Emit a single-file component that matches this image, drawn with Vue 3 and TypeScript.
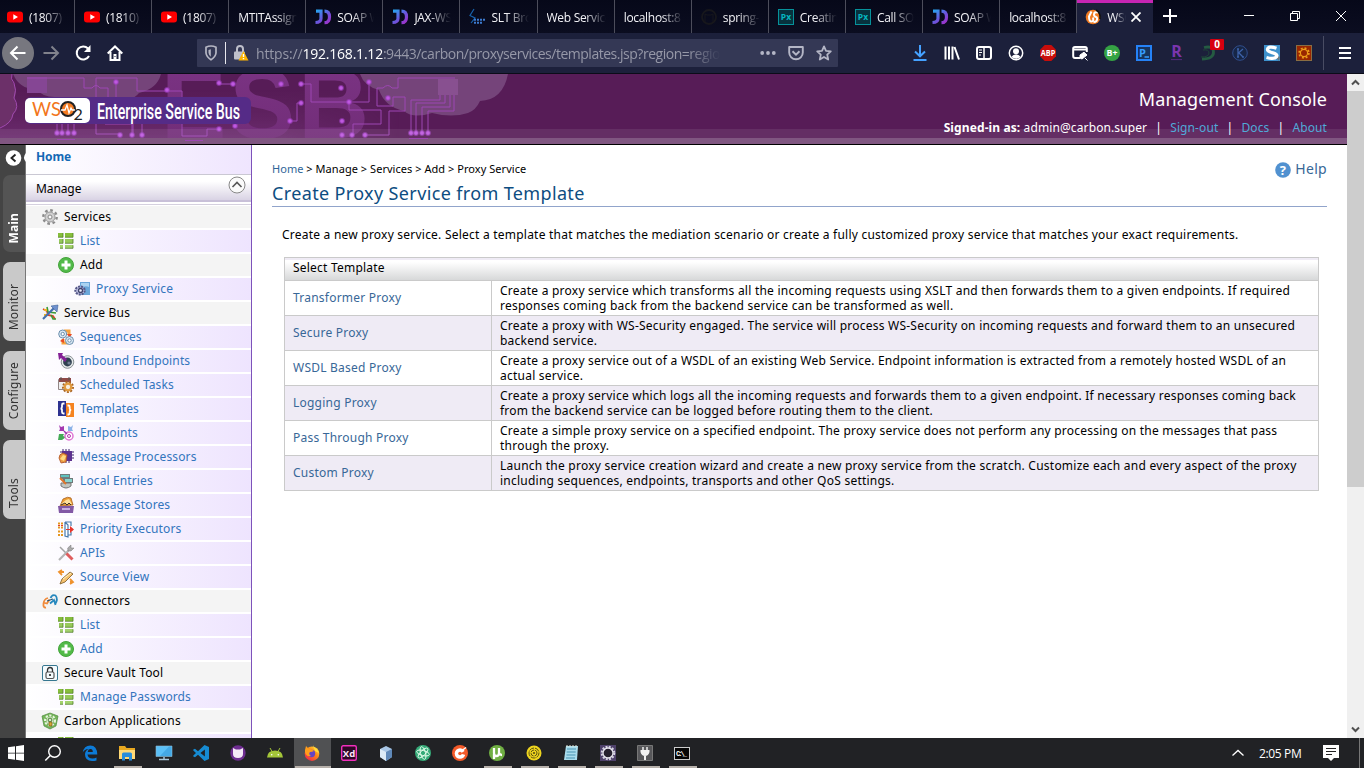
<script setup lang="ts">
interface Tab { label: string; icon?: string; active?: boolean }
interface MenuItem { label: string; icon: string; level: number }

const icons: Record<string, string> = {
  youtube: '<rect x="0" y="2.5" width="16" height="11" rx="3" fill="#f00"/><path d="M6.3 5.3v5.4L11 8z" fill="#fff"/>',
  jd: '<defs><linearGradient id="jdg" x2="1" y2="1"><stop stop-color="#25a5f0"/><stop offset=".55" stop-color="#6a55dd"/><stop offset="1" stop-color="#a030c8"/></linearGradient></defs><path d="M1 2.200h5v7.300Q6 13.300 .5 13.500M9.500 2.200q5 0 5 5.700t-5 5.800" fill="none" stroke="url(#jdg)" stroke-width="3.200"/>',
  slt: '<path d="M5 0 1 6.5l5 2.5-4 5" fill="none" stroke="#1763ae" stroke-width="1.2"/><path d="M5 10.7h11M5 13.7h9" stroke="#3d7bd0" stroke-width="2" stroke-dasharray="2 1"/>',
  github: '<circle cx="8" cy="8" r="7" fill="none" stroke="#17171c" stroke-width="1.8"/><path d="M4 13V5l2 1h4l2-1v8" stroke="#17171c" fill="none"/>',
  px: '<rect x=".5" y=".5" width="15" height="15" fill="#07323e" stroke="#06929b"/><text x="8" y="11" text-anchor="middle" font-family="Open Sans,sans-serif" font-size="8.5" font-weight="700" fill="#05b7c0">Px</text>',
  carbon: '<circle cx="8" cy="8" r="7.300" fill="#f07b22"/><path d="M6.500 2.500 4 7.500q0 5 2.500 5t1.500-4M13 3.500q-4-1-4 2 0 2 2 2.500t.5 4q-1 1-3 1" stroke="#fff" stroke-width="2" fill="none"/><path d="M11 1q5 3 4 9" stroke="#111" stroke-width="1.500" fill="none"/>',
  back: '<path d="M15.500 8H1M7.500 1.500 1 8l6.500 6.500" fill="none" stroke="#fff" stroke-width="2"/>',
  forward: '<path d="M.5 8H15M8.500 1.500 15 8l-6.500 6.500" fill="none" stroke="#81828c" stroke-width="2"/>',
  reload: '<path d="M14 11a6.500 6.500 0 1 1-1-7.500" fill="none" stroke="#fff" stroke-width="2"/><path d="M15.500 0v7H9z" fill="#fff"/>',
  home: '<path d="M.7 8.500 8 1.500l7.300 7M3.500 7v8h9V7" fill="none" stroke="#fff" stroke-width="2"/><path d="M6.500 9h3v6h-3z" fill="#fff"/><path d="M7.500 11.500h1" stroke="#1c203b"/>',
  shield: '<path d="M3 2.200Q8-.2 13 2.200V8q-.5 4-5 6.700Q3.500 12 3 8z" fill="none" stroke="#b6b7c4" stroke-width="1.700"/><path d="M7.800 4.200v7.500q-2-1.500-2.300-4V5z" fill="#b6b7c4"/>',
  lock: '<path d="M4 7V4q0-3 3-3t3 3v3" fill="none" stroke="#bebfca" stroke-width="2"/><rect x="1" y="6.500" width="11" height="8" rx="1" fill="#bebfca"/><path d="m10.500 6 5 9.500H5.500z" fill="#fdb400"/><path d="M10.500 9v3m0 1v1.300" stroke="#fff" stroke-width="1.400"/>',
  dots: '<circle cx="2.200" cy="8" r="1.900" fill="#b4b6c6"/><circle cx="8" cy="8" r="1.900" fill="#b4b6c6"/><circle cx="13.800" cy="8" r="1.900" fill="#b4b6c6"/>',
  pocket: '<path d="M1.200 2h13.600v5.500a6.800 6.800 0 0 1-13.600 0z" fill="none" stroke="#b4b6c6" stroke-width="1.900" stroke-linejoin="round"/><path d="m4.500 6.200 3.500 3.400 3.500-3.400" fill="none" stroke="#b4b6c6" stroke-width="1.900"/>',
  star: '<path d="m8 1.400 2 4.400 4.800.5-3.600 3.300 1 4.900L8 12l-4.200 2.500 1-4.900L1.200 6.300 6 5.800z" fill="none" stroke="#b4b6c6" stroke-width="1.800" stroke-linejoin="round"/>',
  download: '<path d="M8 0v11M3 6.500l5 4.800 5-4.800M1.500 15h13" fill="none" stroke="#45a1ff" stroke-width="2"/>',
  library: '<path d="M1.500 1.500v13M5 1.500v13M8.500 1.500v13M10.500 2l4.500 12.500" fill="none" stroke="#fff" stroke-width="2"/>',
  sidebar: '<rect x="1" y="2" width="14" height="12" rx="2" fill="none" stroke="#fff" stroke-width="2"/><path d="M8 2v12" stroke="#fff" stroke-width="1.500"/><path d="M3 5h3M3 7.500h3M3 10h2" stroke="#fff"/>',
  account: '<circle cx="8" cy="8" r="6.700" fill="none" stroke="#fff" stroke-width="1.500"/><circle cx="8" cy="6.300" r="3" fill="#fff"/><path d="M3.500 12q1.500-3 4.500-2.500 3-.5 4.500 2.500-4.500 3.500-9 0" fill="#fff"/>',
  abp: '<path d="M4.700 0h6.600L16 4.700v6.600L11.300 16H4.700L0 11.300V4.700z" fill="#c70d0b"/><text x="8" y="11" text-anchor="middle" font-family="Open Sans,sans-serif" font-weight="700" font-size="8.200" textLength="14.500" lengthAdjust="spacingAndGlyphs" fill="#fff">ABP</text>',
  edit: '<path d="M8 13H3q-1.800 0-1.800-2V3.500q0-1.500 1.800-1.500h10q1.800 0 1.800 1.500V7" fill="none" stroke="#fff" stroke-width="2"/><path d="M1 4.500h14" stroke="#fff" stroke-width="2"/><path d="m8 10 4-2.800 3 2.800-5 4-2-1zM13 13l2.500 2.500" fill="#fff" stroke="#fff"/>',
  bplus: '<circle cx="8" cy="8" r="8" fill="#35a344"/><text x="8" y="11" text-anchor="middle" font-family="Open Sans,sans-serif" font-weight="700" font-size="8.800" fill="#fff">B+</text>',
  pterm: '<rect x="0" y="0" width="16" height="16" fill="#2582f7"/><rect x="2" y="2" width="12" height="12" fill="#17345f"/><text x="3" y="12" font-family="Open Sans,sans-serif" font-weight="700" font-size="11" fill="#369cff">P</text><path d="M8.500 12h4.500" stroke="#369cff" stroke-width="1.500"/>',
  rext: '<text x="3.300" y="12" font-family="Open Sans,sans-serif" font-weight="700" font-size="16" fill="#7b35ae">R</text><path d="M3 14.600h11" stroke="#55277e"/>',
  curl: '<path d="M4 2.500q9-2 9.500 4Q14 14 2 14" fill="none" stroke="#255b42" stroke-width="2.800"/><path d="M3 5q6-1 6 3t-8 4" fill="none" stroke="#1e4438" stroke-width="1"/>',
  kext: '<circle cx="8" cy="8" r="7.300" fill="#172646" stroke="#304e8d"/><path d="M5 4h2M6 4v8M5 12h2M6.500 8 11 4M7 8l4 4m-1 0h2" fill="none" stroke="#3e62a9" stroke-width="1.300"/>',
  sext: '<path d="M0 0h16v16H0z" fill="#3e91cc"/><path d="M15 16 8 8l8 4z" fill="#65777f"/><path d="M12.500 3.200q-8-2.600-9 1-.3 2 4.700 3.500 6 1.500 4.300 4-2 3-10 .8" fill="none" stroke="#fff" stroke-width="3.300"/>',
  gearext: '<rect x=".5" y=".5" width="15" height="15" fill="#992600" stroke="#896d43"/><circle cx="8" cy="8" r="4.900" fill="none" stroke="#ed9c19" stroke-width="1.700" stroke-dasharray="1.924 1.924"/><circle cx="8" cy="8" r="3.600" fill="none" stroke="#ed9c19" stroke-width="1.200"/>',
  gear: '<circle cx="8" cy="8" r="6.700" fill="none" stroke="#8b8b8b" stroke-width="2.400" stroke-dasharray="2.630 2.630"/><circle cx="8" cy="8" r="5" fill="#d0d0d0" stroke="#999"/><circle cx="8" cy="8" r="2" fill="#f9f9f9" stroke="#888"/>',
  list: '<path d="M0 0h5v4H0zM7 0h8v4H7z" fill="#86bd3c"/><path d="M1 6h4v4H1zM7 6h8v4H7z" fill="#97c95a"/><path d="M2 12h3v3H2zM7 12h8v3H7z" fill="#a4d26e"/><path d="M0 4.300h5V0M7 4.300h8V0M1 10.300h4V6M7 10.300h8V6M2 15.300h3M7 15.300h8v-3" fill="none" stroke="#4f7f24" stroke-width=".8"/>',
  add: '<circle cx="8" cy="8" r="7.500" fill="#52ba49" stroke="#43a43a"/><path d="M8 3.500v9M3.500 8h9" stroke="#fff" stroke-width="3"/>',
  proxy: '<path d="M6 1h10v13H6z" fill="#6aa6d9"/><path d="M7 2h8v4q-4-2-8 1z" fill="#abd3f1"/><ellipse cx="6" cy="9.500" rx="4.700" ry="4" fill="#bbbbe0" stroke="#555788" stroke-width="2" stroke-dasharray="2 1"/><circle cx="6.500" cy="9.500" r="2" fill="#eef" stroke="#3e426b" stroke-width="1.300"/>',
  bus: '<path d="m1 4 4 2 1 4 5 1 2 3" fill="none" stroke="#d84428" stroke-width="1.800"/><path d="m5 2 1 5 8 1M9 10l2 4h3" fill="none" stroke="#3a9a36" stroke-width="1.600"/><path d="M2 5h3m-3 5h3" stroke="#eeb224" stroke-width="2"/><path d="M1 14 12 3" stroke="#426fae" stroke-width="2.200"/><path d="m9 1 7-1-1 7z" fill="#6e91ce" stroke="#3e639b" stroke-width=".6"/>',
  sequences: '<path d="M6 2h5v4M5 10v4h5" fill="none" stroke="#f5a33f" stroke-width="3"/><path d="m9 5 2.500 4L14 5zM2 12l4-3v5z" fill="#e94b25"/><circle cx="4.700" cy="5" r="4" fill="#dceaf5" stroke="#6c8fad"/><circle cx="11.500" cy="11.500" r="4" fill="#dceaf5" stroke="#6c8fad"/><circle cx="4.700" cy="5" r="1.700" fill="#fff" stroke="#6c8fad"/><circle cx="11.500" cy="11.500" r="1.700" fill="#fff" stroke="#6c8fad"/>',
  inbound: '<circle cx="9.500" cy="9" r="6.300" fill="#e5e8ea" stroke="#8a9295"/><circle cx="9.500" cy="9" r="4.400" fill="#304050"/><circle cx="11" cy="10" r="1.600" fill="#718093"/><path d="M0 0h5l-1 2 5 4-2 3-4-4-2 2z" fill="#842095"/>',
  scheduled: '<path d="M.5 2.500h12v10H.5z" fill="#efefef" stroke="#928786"/><path d="M1 1h12v4H1z" fill="#8f4a48"/><path d="M3 0v3M11 0v3" stroke="#555"/><circle cx="10" cy="10" r="5" fill="none" stroke="#a96420" stroke-width="2" stroke-dasharray="2 1.400"/><circle cx="10" cy="10" r="3.300" fill="#f7eee1" stroke="#e19a3f" stroke-width="2.300"/>',
  templates: '<path d="M0 0h8v15H0z" fill="#2d3190"/><path d="M8 2h8v14H8z" fill="#f58220"/><path d="M6.500 2.500H5.300q-1.300 0-1.300 1.500v2q0 1.500-1.500 1.500Q4 7.500 4 9v2q0 1.500 1.300 1.500h1.200M9.500 4.500h1q1.200 0 1.200 1.500v1.500q0 1.500 1.500 1.500-1.500 0-1.500 1.500V12q0 1.500-1.200 1.500h-1" fill="none" stroke="#fff" stroke-width="1.800"/>',
  endpoints: '<path d="m1 0 2 2 3-1v5H1l1-2z" fill="#a439b0"/><path d="m15 0-2 2-3-1v5h5l-1-2z" fill="#8ab2e8"/><path d="m0 15 1-6h5l-1 2 3 1-4 3z" fill="#43aa55"/><circle cx="11" cy="11" r="4" fill="#fff" stroke="#df75d3" stroke-width="1.500"/><circle cx="11" cy="11" r="1.500" fill="none" stroke="#ba39b4"/><path d="m6 6 3 3" stroke="#9c38ad" stroke-width="1.500"/>',
  processors: '<path d="M5 0v14M8 0v14M11 0v14M2 3h14M2 6h14M2 9h14" stroke="#3d206b"/><rect x="4" y="2" width="10" height="10" fill="#5c318f"/><path d="M1 9q0-4 4-5l4 2-1 7-5 1z" fill="#ea9a42" stroke="#ae5224" stroke-width=".8"/><path d="m2 10 3-4 3 1-2 5z" fill="#ffdb83"/>',
  entries: '<path d="M2 1h10v5H2z" fill="#737e7d"/><path d="M3 2h8v2H3z" fill="#5fc3be"/><path d="M5 5h10v5H5z" fill="#6f7979"/><path d="M7 6h7v3H7z" fill="#88d4ce"/><path d="M3 10h10v3q-5 4-10 0z" fill="#c0c4bf" stroke="#747777"/><path d="m2 5 6 6" stroke="#df762b" stroke-width="2"/>',
  stores: '<path d="m2 9 3-7q5-3 8-1l2 7z" fill="#ee9e33" stroke="#a76224" stroke-width=".8"/><path d="m3 7 5-4 3-1 3 5z" fill="#ffdf9a"/><path d="M0 9h16l-1 7H1z" fill="#8259a5"/><path d="M4 11h8v2H4z" fill="#c9afe0"/><path d="m3 8 4-2 2 2 2-2 2 2" stroke="#3f3128" fill="none"/>',
  priority: '<path d="M0 2.500h5M0 6.500h5M0 10.500h5M0 14h5" stroke="#e59721" stroke-width="1.800" stroke-dasharray="2 1"/><path d="M0 4.500h5" stroke="#e43a2d" stroke-dasharray="2 1"/><path d="M7 1h6v4M7 1v14l3 1V4L7 1M10 14h3v-3" fill="#fff" stroke="#4879ac" stroke-width="1.200"/><path d="M8 8h4V5l4 3.500-4 3.500V9H8z" fill="#e6332a"/>',
  apis: '<path d="M2 2 14 14" stroke="#a4a4a4" stroke-width="1.500"/><path d="m1 15 9.500-9.500" stroke="#b4b4b4" stroke-width="2.200"/><path d="m10 6-.3-3L13 0v3h3l-3 3z" fill="#aaa" stroke="#777" stroke-width=".5"/><path d="m8.500 8.500 6 6" stroke="#df5c5d" stroke-width="3"/>',
  source: '<path d="M4 1 1 3l3 3M1 3h5M12 10l3 3-3 2m3-2h-3" fill="none" stroke="#ef922d" stroke-width="1.800"/><path d="m2 15 2-5 8-7 3 2-8 8z" fill="#f5c16e" stroke="#876532" stroke-width=".9"/><path d="M5 10l8-6" stroke="#fff1c0"/>',
  connectors: '<path d="M4 14.500Q1 15 1.500 10.500T6 5M1 9.500l4 1 2.500-4" fill="none" stroke="#f08a3a" stroke-width="1.800"/><path d="M8.500 5q2-4 5-2.500 3 3.500-.5 9M8 10.500l4-3.500 1.500 5" fill="none" stroke="#2587bd" stroke-width="1.800"/><path d="m5 8 6-2" stroke="#245274" stroke-width="1.300"/>',
  vault: '<rect x=".5" y=".5" width="15" height="15" rx="1.500" fill="#f5fbfd" stroke="#367790"/><rect x="4" y="7" width="8" height="6.500" rx="1.500" fill="none" stroke="#555" stroke-width="1.200"/><path d="M5.500 7V5q0-2.500 2.500-2.500t2.500 2.500v2" fill="none" stroke="#333" stroke-width="1.300"/><circle cx="8" cy="10" r="1.100" fill="#222"/>',
  capps: '<path d="m8 0 8 3-2 10-6 3-6-3L0 3z" fill="#74b55a" stroke="#508a3d" stroke-width=".7"/><circle cx="8" cy="7.500" r="5" fill="none" stroke="#e8f4df" stroke-width="2" stroke-dasharray="2.200 1.500"/><circle cx="8" cy="7.500" r="3.500" fill="#d4e9c9"/><circle cx="8" cy="7" r="1.900" fill="none" stroke="#4c7c35"/><path d="M7 9h3v4H7z" fill="#d8a635" stroke="#745c1c" stroke-width=".7"/>',
  help: '<circle cx="8" cy="8" r="7.800" fill="#5191d0"/><text x="8" y="12.700" text-anchor="middle" font-family="Open Sans,sans-serif" font-weight="700" font-size="13" fill="#fff">?</text>',
  windows: '<path d="M0 2.300 7 1.300V7.700H0zM8 1.200l8-1.200v7.700H8zM0 8.500h7v6.300l-7-1zM8 8.500h8V16l-8-1.200z" fill="#fff"/>',
  search: '<circle cx="9.500" cy="6.500" r="5.800" fill="none" stroke="#fff" stroke-width="1.400"/><path d="m5.300 10.500-5 5" stroke="#fff" stroke-width="1.500"/>',
  edge: '<path d="M.7 7.500Q2 .7 8.300.5q6.700 0 7 9H5.500q.5 4 5 4 2.500 0 4-1v3Q12.500 16 10 16q-7-.2-7-6.500Q3 5.500 6.500 4 2.500 4 .7 7.500M5.700 7h5.100Q10.800 3.700 8.200 4q-2.200.2-2.500 3" fill="#0d7bd7"/>',
  folder: '<path d="M0 1h6l1.500 2H16v11H0z" fill="#e9a920"/><path d="M0 5h16v9H0z" fill="#ffd976"/><path d="M3 9q0-1.500 1.500-1.500h7Q13 7.500 13 9v6.500h-3V12H6v3.500H3z" fill="#288ddb"/>',
  pc: '<path d="M0 1h16v10.500H0z" fill="#5bc0f8" stroke="#8db7cc" stroke-width=".6"/><path d="m4 11 9-9.500h2.500V11z" fill="#44a9e6"/><path d="M3 14.500h10M8 12v2" stroke="#a7c6da" stroke-width="1.500"/>',
  vscode: '<path d="m11.500 0 4.500 2v12l-4.500 2L5 9.800 2 12.300.3 11.500v-1L3 8 .3 5.500v-1L2 3.700l3 2.500zm.4 4.500L7.400 8l4.500 3.500z" fill="#168bd2"/>',
  ghdesk: '<circle cx="8" cy="8" r="7.700" fill="#6e2d91"/><path d="m3 3 3 1.500h4L13 3v6q0 4-5 4T3 9z" fill="#f4e9f7"/>',
  android: '<path d="M0 12.500Q.5 5.500 8 5.500t8 7z" fill="#a4c639"/><path d="m3 3 2 3.500M13 3l-2 3.500" stroke="#a4c639"/><circle cx="4.700" cy="9.700" r=".8" fill="#fff"/><circle cx="11.300" cy="9.700" r=".8" fill="#fff"/>',
  firefox: '<defs><linearGradient id="ffg" x1="1" y1="0" x2=".2" y2="1"><stop stop-color="#fff044"/><stop offset=".45" stop-color="#ff8a16"/><stop offset="1" stop-color="#ee214e"/></linearGradient></defs><circle cx="8" cy="8.700" r="7.300" fill="url(#ffg)"/><path d="M9 0q1 3 4 4l2 4-4-2z" fill="#ffdf3e"/><circle cx="7.500" cy="8.500" r="3.700" fill="#6544c5"/><path d="M1 5 2 1l3 3q3 0 5 2-2 1-4 1-2 2 1 4-5 1-6-4z" fill="#ff9d1b"/>',
  xd: '<rect x=".7" y=".7" width="14.600" height="14.600" rx="1.500" fill="#2e0826" stroke="#f22fbd" stroke-width="1.400"/><text x="8" y="11.700" text-anchor="middle" font-family="Open Sans,sans-serif" font-size="9.500" font-weight="700" fill="#ffe4fb">Xd</text>',
  cube: '<path d="m8 1 6 3v8l-6 4-6-4V4z" fill="#a9c7e6"/><path d="m2 4 6 3v9l-6-4z" fill="#dcebf7"/><path d="m8 7 6-3v8l-6 4z" fill="#5f89b9"/>',
  atom: '<circle cx="8" cy="8" r="8" fill="#35aa78"/><g fill="none" stroke="#eaffef" stroke-width=".9"><ellipse cx="8" cy="8" rx="6.500" ry="2.500" transform="rotate(15 8 8)"/><ellipse cx="8" cy="8" rx="6.500" ry="2.500" transform="rotate(75 8 8)"/><ellipse cx="8" cy="8" rx="6.500" ry="2.500" transform="rotate(135 8 8)"/></g>',
  postman: '<circle cx="8" cy="8" r="8" fill="#f35a29"/><circle cx="8" cy="8.500" r="5.300" fill="#fff"/><path d="M15 4.500 8.500 8.500l6.500 2z" fill="#f35a29"/><path d="M14 2.500 8 7" stroke="#fff" stroke-width="1.300"/><circle cx="8" cy="8.500" r="1.800" fill="#f35a29"/>',
  utorrent: '<circle cx="8" cy="8" r="8" fill="#70af43"/><path d="M5 3v5q0 3 2.500 3T10 8V3m0 5q1 2 3 2M5 9v5" stroke="#fff" stroke-width="2.300" fill="none"/>',
  spiral: '<circle cx="8" cy="8" r="7.500" fill="#eed51f"/><g fill="none" stroke="#5a5110"><circle cx="8" cy="8" r="5" stroke-dasharray="5 1"/><circle cx="8" cy="8" r="3" stroke-dasharray="4 1"/></g><circle cx="8" cy="8" r="1.100" fill="#5a5110"/>',
  notepad: '<path d="M3 1h12l-1 14H1z" fill="#a9dcec"/><path d="M4 4h9M3.700 7h9M3.500 10h9M3 13h9" stroke="#4993b1"/><path d="M4 0v2m3-2v2m3-2v2m3-2v2" stroke="#e3e3d5"/>',
  eclipse: '<path d="M0 0h16v16H0z" fill="#4e416a"/><circle cx="8" cy="8" r="6.300" fill="none" stroke="#d5d3e1" stroke-width="2" stroke-dasharray="2 1.300"/><circle cx="8" cy="8" r="5" fill="#25212e" stroke="#e8e7ef" stroke-width="1.300"/>',
  plug: '<path d="M.5.5h15v15H.5z" fill="#57575a" stroke="#777"/><path d="M6 2v4m4-4v4" stroke="#eee" stroke-width="1.500"/><path d="M3.500 5h9v2q-1 4-4.500 4-3.500 0-4.500-4zM7 10.500h2V15H7z" fill="#f2f2f2"/>',
  cmd: '<rect x=".5" y="2.500" width="15" height="12" fill="#050505" stroke="#ccc"/><text x="2" y="11" font-family="Liberation Mono,monospace" font-size="7" font-weight="700" fill="#fff" textLength="11">C:\\_</text>',
}

const tabs: Tab[] = [
  { label: '(1807)', icon: 'youtube' }, { label: '(1810)', icon: 'youtube' }, { label: '(1807)', icon: 'youtube' },
  { label: 'MTITAssign' }, { label: 'SOAP W', icon: 'jd' }, { label: 'JAX-WS', icon: 'jd' }, { label: 'SLT Bro', icon: 'slt' },
  { label: 'Web Service' }, { label: 'localhost:8' }, { label: 'spring-', icon: 'github' }, { label: 'Creatin', icon: 'px' },
  { label: 'Call SO', icon: 'px' }, { label: 'SOAP W', icon: 'jd' }, { label: 'localhost:8' }, { label: 'WSO', icon: 'carbon', active: true },
]
const extensions = ['download', 'library', 'sidebar', 'account', 'abp', 'edit', 'bplus', 'pterm', 'rext', 'curl', 'kext', 'sext', 'gearext']
const sideTabs = ['Main', 'Monitor', 'Configure', 'Tools']
const m = (label: string, icon: string, level: number): MenuItem => ({ label, icon, level })
const menu: MenuItem[] = [
  m('Services', 'gear', 1), m('List', 'list', 2), m('Add', 'add', 0), m('Proxy Service', 'proxy', 3),
  m('Service Bus', 'bus', 1), m('Sequences', 'sequences', 2), m('Inbound Endpoints', 'inbound', 2),
  m('Scheduled Tasks', 'scheduled', 2), m('Templates', 'templates', 2), m('Endpoints', 'endpoints', 2),
  m('Message Processors', 'processors', 2), m('Local Entries', 'entries', 2), m('Message Stores', 'stores', 2),
  m('Priority Executors', 'priority', 2), m('APIs', 'apis', 2), m('Source View', 'source', 2),
  m('Connectors', 'connectors', 1), m('List', 'list', 2), m('Add', 'add', 2), m('Secure Vault Tool', 'vault', 1),
  m('Manage Passwords', 'list', 2), m('Carbon Applications', 'capps', 1), m('List', 'list', 2),
]
const templates: { name: string; lines: string[] }[] = [
  { name: 'Transformer Proxy', lines: ['Create a proxy service which transforms all the incoming requests using XSLT and then forwards them to a given endpoints. If required', 'responses coming back from the backend service can be transformed as well.'] },
  { name: 'Secure Proxy', lines: ['Create a proxy with WS-Security engaged. The service will process WS-Security on incoming requests and forward them to an unsecured', 'backend service.'] },
  { name: 'WSDL Based Proxy', lines: ['Create a proxy service out of a WSDL of an existing Web Service. Endpoint information is extracted from a remotely hosted WSDL of an', 'actual service.'] },
  { name: 'Logging Proxy', lines: ['Create a proxy service which logs all the incoming requests and forwards them to a given endpoint. If necessary responses coming back', 'from the backend service can be logged before routing them to the client.'] },
  { name: 'Pass Through Proxy', lines: ['Create a simple proxy service on a specified endpoint. The proxy service does not perform any processing on the messages that pass', 'through the proxy.'] },
  { name: 'Custom Proxy', lines: ['Launch the proxy service creation wizard and create a new proxy service from the scratch. Customize each and every aspect of the proxy', 'including sequences, endpoints, transports and other QoS settings.'] },
]
const taskbar = ['windows', 'search', 'edge', 'folder', 'pc', 'vscode', 'ghdesk', 'android', 'firefox', 'xd', 'cube', 'atom', 'postman', 'utorrent', 'spiral', 'notepad', 'eclipse', 'plug', 'cmd']
const running = ['folder', 'firefox', 'utorrent', 'spiral', 'notepad', 'eclipse', 'plug', 'cmd']
const nodes: number[][] = [[116, 82], [167, 90], [219, 83], [233, 84], [281, 84], [301, 84], [341, 88], [369, 82], [388, 98], [301, 103], [349, 102], [290, 121], [342, 121], [219, 129], [235, 126], [120, 135], [132, 135], [142, 135], [342, 135], [352, 135], [365, 135], [57, 133], [62, 133], [68, 133], [74, 133], [411, 133], [416, 133], [422, 133], [428, 133]]
</script>

<template>
  <div class="screen">
    <div class="tabbar">
      <div v-for="(t, i) in tabs" :key="i" class="tab" :class="{ active: t.active, plain: !t.icon, first: i === 0 }">
        <svg v-if="t.icon" class="ic" viewBox="0 0 16 16" v-html="icons[t.icon]"></svg>
        <span class="tablabel">{{ t.label }}</span>
        <svg v-if="t.active" class="tabclose" viewBox="0 0 10 10"><path d="M.5.5l9 9M9.500.5l-9 9" stroke="#fff" stroke-width="1.800" /></svg>
      </div>
      <svg class="newtab" viewBox="0 0 14 14"><path d="M7 0v14M0 7h14" stroke="#fff" stroke-width="2" /></svg>
      <div class="wincontrols">
        <svg viewBox="0 0 10 10"><path d="M0 4.500h10" stroke="#fff" /></svg>
        <svg viewBox="0 0 10 10"><path d="M.5 2.500h7v7h-7zM2.500 2.500v-2h7v7h-2" fill="none" stroke="#fff" /></svg>
        <svg viewBox="0 0 10 10"><path d="M0 0l10 10M10 0L0 10" stroke="#fff" /></svg>
      </div>
    </div>

    <div class="toolbar">
      <div class="nav">
        <span class="backbtn"><svg class="ic" viewBox="0 0 16 16" v-html="icons.back"></svg></span>
        <svg class="ic" viewBox="0 0 16 16" v-html="icons.forward"></svg>
        <svg class="ic" viewBox="0 0 16 16" v-html="icons.reload"></svg>
        <svg class="ic" viewBox="0 0 16 16" v-html="icons.home"></svg>
      </div>
      <div class="urlbar">
        <svg class="ic" viewBox="0 0 16 16" v-html="icons.shield"></svg>
        <i class="urlsep"></i>
        <svg class="ic" viewBox="0 0 16 16" v-html="icons.lock"></svg>
        <span class="url">https://<b>192.168.1.12</b><span class="path">:9443/carbon/proxyservices/templates.jsp?region=region1</span></span>
        <span class="urlicons">
          <svg v-for="n in ['dots', 'pocket', 'star']" :key="n" class="ic" viewBox="0 0 16 16" v-html="icons[n]"></svg>
        </span>
      </div>
      <div class="exts">
        <span v-for="n in extensions" :key="n" class="ext">
          <svg class="ic" viewBox="0 0 16 16" v-html="icons[n]"></svg>
          <em v-if="n === 'curl'" class="badge">0</em>
        </span>
      </div>
      <i class="toolsep"></i>
      <svg class="burger" viewBox="0 0 12 12"><path d="M0 1h12M0 6h12M0 11h12" stroke="#fff" stroke-width="2" /></svg>
    </div>

    <div class="page">
      <div class="content">
        <header class="head">
          <svg class="art" viewBox="0 74 510 70">
            <defs>
              <linearGradient id="esb" x2="0" y2="1"><stop stop-color="#7c3485" /><stop offset="1" stop-color="#702c76" /></linearGradient>
              <radialGradient id="glow"><stop stop-color="#c868e8" /><stop offset=".45" stop-color="#b04bd2" /><stop offset="1" stop-color="#9038b0" stop-opacity="0" /></radialGradient>
              <linearGradient id="haze" x2="0" y2="1"><stop stop-color="#783278" stop-opacity="0" /><stop offset="1" stop-color="#8a4391" stop-opacity=".4" /></linearGradient>
              <linearGradient id="fade"><stop offset=".7" stop-color="#fff" /><stop offset="1" stop-color="#fff" stop-opacity="0" /></linearGradient>
              <mask id="fadeout"><rect x="0" y="74" width="400" height="70" fill="url(#fade)" /></mask>
            </defs>
            <rect x="0" y="74" width="510" height="70" fill="#571c57" />
            <rect x="0" y="90" width="400" height="48" fill="url(#haze)" mask="url(#fadeout)" />
            <path d="M0 74h12q-2 6 2 10 4 8 0 15 6 9-1 16-1 9-13 12z" fill="#6c3069" />
            <path d="M12 74q-2 5 2 9 3 7 0 15 6 9-1 16-1 9-13 14" fill="none" stroke="#a04aaf" />
            <path d="M13 74q7 16 24 15 6 9 20 8 26 12 52 6 22 0 30-10 18-4 22-19z" fill="#75447a" />
            <path d="M360 74q4 12 19 16 6 17 25 21 9 8 28 2 20 5 36 0 8-3 12-12 23-1 28-27z" fill="#75447a" />
            <text x="161" y="138" font-family="Liberation Sans, sans-serif" font-weight="700" font-size="98" textLength="208" fill="url(#esb)">ESB</text>
            <rect x="27" y="77" width="20" height="16" fill="#854694" />
            <rect x="438" y="79" width="20" height="16" fill="#885090" />
            <g fill="none" stroke="#9d47b3">
              <path d="M27 78h57v10h8q4-5 8 0h8v10M96 96V78h41v13h45v14h34M116 82v20M96 96v38h24M133 124v10M142 124v10M105 124h27v11M57 116v17M62 116v17M68 116v17M74 116v17M182 120v16h25v-7h12" />
              <path d="M233 84h-14M290 121h7v-18h4M301 84h10v18h58V82M349 102v8h32v14h-28v11M365 135h24v-24h16V97h-12v9h-16v-18h6q5-5 9 0h6V78h57" />
              <path d="M411 133v-33h29V95M416 133v-30h29v-8M422 133v-26h28V95M428 133v-22h26V95M57 139h18M185 140h18M409 139h19" />
            </g>
            <circle v-for="(n, i) in nodes" :key="i" :cx="n[0]" :cy="n[1]" r="3.600" fill="url(#glow)" />
            <rect x="0" y="129" width="510" height="9" fill="#fff" opacity=".08" />
            <rect x="0" y="138" width="510" height="6" fill="#805681" />
            <path d="M57 139.500h18M185 140.500h18M409 138.500h19" stroke="#9d47b3" />
            <rect x="25" y="97" width="226" height="27" rx="6" fill="#552b87" />
            <rect x="25" y="98" width="65" height="25" rx="5" fill="#fff" />
            <text x="32" y="116" font-family="Lato, sans-serif" font-size="20" textLength="29" lengthAdjust="spacingAndGlyphs" fill="#f2761b">WS</text>
            <circle cx="68" cy="109" r="7" fill="#f47b20" stroke="#222" stroke-width="2" />
            <path d="M61 110h4l2-5 2 8 2-5 1 2h3" fill="none" stroke="#fff" stroke-width="1.300" />
            <text x="73.500" y="120" font-family="Lato, sans-serif" font-size="16" fill="#222">2</text>
            <text x="97" y="118.500" font-family="Roboto, sans-serif" font-weight="500" font-size="22" textLength="143" lengthAdjust="spacingAndGlyphs" fill="#fff">Enterprise Service Bus</text>
          </svg>
          <div class="console">
            <div class="ctitle">Management Console</div>
            <div class="signed"><b>Signed-in as:</b>&nbsp;admin@carbon.super<i>|</i><a>Sign-out</a><i>|</i><a>Docs</a><i>|</i><a>About</a></div>
          </div>
        </header>

        <div class="body">
          <div class="strip">
            <div class="collapse"><svg viewBox="0 0 26 18"><circle cx="13.500" cy="9" r="7.800" fill="#fff" /><path d="m15.500 5.500-4 3.500 4 3.500" fill="none" stroke="#222" stroke-width="1.900" /><path d="M26 4q-4 4.500 0 9" fill="#fff" /></svg></div>
            <div v-for="(s, i) in sideTabs" :key="s" class="vtab" :class="{ on: i === 0 }"><span>{{ s }}</span></div>
          </div>
          <nav class="menu">
            <div class="mhome">Home</div>
            <div class="mmanage"><span>Manage</span>
              <svg viewBox="0 0 18 18"><circle cx="9" cy="9" r="8" fill="#fafafa" stroke="#888" /><path d="m4.500 11 4.500-4.500 4.500 4.500" fill="none" stroke="#555" stroke-width="1.600" /></svg>
            </div>
            <div class="mrule"></div>
            <div v-for="(it, i) in menu" :key="i" class="mi" :class="'l' + it.level">
              <svg class="ic" viewBox="0 0 16 16" v-html="icons[it.icon]"></svg><span>{{ it.label }}</span>
            </div>
          </nav>
          <main class="main">
            <div class="crumbrow">
              <div class="crumbs"><a>Home</a> &gt; Manage &gt; Services &gt; Add &gt; Proxy Service</div>
              <div class="help"><svg class="ic" viewBox="0 0 16 16" v-html="icons.help"></svg>Help</div>
            </div>
            <h2>Create Proxy Service from Template</h2>
            <p class="intro">Create a new proxy service. Select a template that matches the mediation scenario or create a fully customized proxy service that matches your exact requirements.</p>
            <div class="tbl">
              <div class="th">Select Template</div>
              <div v-for="(t, i) in templates" :key="t.name" class="tr" :class="{ alt: i % 2 === 1 }">
                <div class="tn">{{ t.name }}</div>
                <div class="td"><div v-for="l in t.lines" :key="l">{{ l }}</div></div>
              </div>
            </div>
          </main>
        </div>
      </div>
      <div class="scroll">
        <svg viewBox="0 0 17 17"><path d="m5 10.500 3.500-3.500 3.500 3.500" fill="none" stroke="#505050" stroke-width="2" /></svg>
        <div class="thumb"></div>
        <svg viewBox="0 0 17 17"><path d="m5 6.500 3.500 3.500L12 6.500" fill="none" stroke="#505050" stroke-width="2" /></svg>
      </div>
    </div>

    <footer class="taskbar">
      <span v-for="n in taskbar" :key="n" class="task" :class="{ running: running.includes(n), current: n === 'firefox' }">
        <svg class="ic" viewBox="0 0 16 16" v-html="icons[n]"></svg>
      </span>
      <div class="tray">
        <svg class="up" viewBox="0 0 12 8"><path d="m.5 6.500 5.500-5 5.500 5" fill="none" stroke="#fff" stroke-width="1.300" /></svg>
        <span class="clock">2:05 PM</span>
        <svg class="note" viewBox="0 0 16 16"><path d="M0 0h16v13h-5l-3 3-3-3H0z" fill="#fff" /><path d="M3 3.500h10M3 6.500h10M3 9.500h6" stroke="#222" /></svg>
        <i class="desk"></i>
      </div>
    </footer>
  </div>
</template>

<style>
body { margin: 0; overflow: hidden; background: #fff; }
</style>

<style scoped>
* { box-sizing: border-box; }
.screen { width: 1364px; height: 768px; display: flex; flex-direction: column; overflow: hidden; font-family: "Noto Sans", "Open Sans", sans-serif; font-size: 12px; color: #000; }
.ic { width: 16px; height: 16px; flex: none; display: block; overflow: visible; }

.tabbar { height: 33px; flex: none; display: flex; background: linear-gradient(#060819, #0b0d20); font-family: "Open Sans", sans-serif; color: #f3f3f7; }
.tab { width: 77.1px; flex: none; display: flex; align-items: center; padding: 1px 8px 0 9px; border-right: 1px solid #4c4d5b; overflow: hidden; }
.tab.first { width: 75px; padding-left: 7px; }
.tab.plain { padding-left: 9px; }
.tablabel { flex: 1; margin-left: 6px; white-space: nowrap; overflow: hidden; letter-spacing: -.3px; -webkit-mask-image: linear-gradient(90deg, #000 40%, transparent 100%); }
.plain .tablabel { margin-left: 0; -webkit-mask-image: linear-gradient(90deg, #000 65%, transparent 100%); }
.tab.active { background: #1c203b; border-top: 3px solid #c725b4; border-right: 0; padding: 0 12px 2px 8px; width: 76px; }
.tabclose { width: 10px; height: 10px; margin-left: 5px; flex: none; }
.newtab { width: 14px; height: 14px; margin: 9px 0 0 10px; }
.wincontrols { margin-left: auto; display: flex; gap: 36px; padding: 11px 18px 0 0; }
.wincontrols svg { width: 10px; height: 10px; }

.toolbar { height: 41px; flex: none; background: #1c203b; border-bottom: 1px solid #0b0c18; display: flex; align-items: center; }
.nav { display: flex; align-items: center; width: 197px; padding-left: 2px; }
.backbtn { width: 32px; height: 32px; border-radius: 50%; background: #77777f; display: flex; align-items: center; justify-content: center; margin-right: 9px; }
.nav > .ic { margin-right: 16px; }
.urlbar { width: 641px; height: 28px; background: #343855; display: flex; align-items: center; padding: 0 6px; border-radius: 1px; }
.urlsep { width: 1px; height: 22px; background: #e8e8ee; margin: 0 7px 0 6px; }
.url { font-family: "Open Sans", sans-serif; font-size: 14px; letter-spacing: -.16px; color: #9698a8; margin-left: 7px; width: 469px; white-space: nowrap; overflow: hidden; -webkit-mask-image: linear-gradient(90deg, #000 92%, transparent 99%); }
.url b { font-weight: 400; color: #fff; letter-spacing: -.22px; }
.path { letter-spacing: -.48px; }
.urlicons { display: flex; gap: 12px; margin-left: auto; }
.exts { display: flex; gap: 16px; margin-left: 74px; }
.ext { position: relative; width: 16px; }
.badge { position: absolute; left: 10px; top: -6px; width: 14px; height: 11px; background: #d70010; color: #fff; font: 700 10px/11px "Open Sans", sans-serif; text-align: center; border-radius: 1px; }
.toolsep { width: 1px; height: 34px; background: #494c63; margin-left: 11px; }
.burger { width: 12px; height: 12px; margin-left: 15px; }

.page { height: 664px; flex: none; display: flex; }
.content { width: 1347px; height: 664px; overflow: hidden; }
.head { height: 71px; border-bottom: 1px solid #000; background: linear-gradient(#571c57 55px, #642e64 55px, #642e64 64px, #805681 64px); display: flex; justify-content: space-between; }
.art { width: 510px; height: 70px; flex: none; }
.console { padding: 13px 20px 0 0; text-align: right; color: #fff; }
.ctitle { font-size: 18px; line-height: 24px; letter-spacing: .13px; }
.signed { line-height: 16px; margin-top: 9px; display: flex; justify-content: flex-end; white-space: nowrap; letter-spacing: .11px; }
.signed i { font-style: normal; width: 23px; text-align: center; }
.signed a { color: #51a9d8; }

.body { display: flex; height: 593px; }
.strip { width: 26px; background: #444; border-right: 1px solid #777; flex: none; display: flex; flex-direction: column; align-items: flex-end; }
.collapse { width: 26px; height: 18px; margin: 4px -1px 8px 0; flex: none; }
.collapse svg { display: block; width: 26px; height: 18px; }
.vtab { width: 22px; height: 79px; margin-bottom: 10px; flex: none; background: #c9c9c9; border-radius: 7px 0 0 7px; display: flex; align-items: flex-end; justify-content: center; padding-bottom: 11px; color: #333; }
.vtab span { writing-mode: vertical-rl; transform: rotate(180deg); line-height: 20px; letter-spacing: .15px; }
.vtab.on { height: 77px; background: #545454; color: #fff; font-weight: 700; padding-bottom: 9px; }
.menu { width: 226px; flex: none; border-right: 1px solid #7d52ba; overflow: hidden; }
.mhome { height: 30px; border-bottom: 1px solid #cac8d3; background: linear-gradient(90deg, #fff, #efe5fe); padding-left: 10px; line-height: 23px; font-weight: 700; color: #1469b5; letter-spacing: -.1px; }
.mmanage { height: 27px; background: linear-gradient(#fff 25%, #d9d3e4); border-bottom: 2px solid #c8c0d8; display: flex; justify-content: space-between; padding: 1px 5px 0 10px; line-height: 25px; letter-spacing: -.1px; }
.mmanage svg { width: 18px; height: 18px; }
.mrule { height: 3px; border-bottom: 1px solid #d5d0df; margin-bottom: 1px; }
.mi { height: 22px; margin-bottom: 2px; display: flex; align-items: center; line-height: 20px; padding-left: 32px; background: linear-gradient(90deg, #fff, #eee4fe); color: #3375bd; letter-spacing: .12px; }
.mi .ic { margin: -1px 6px 0 0; }
.mi span { margin-top: 0; }
.l1 { padding-left: 16px; color: #000; background: #f4f4f4; letter-spacing: .18px; }
.l0 { color: #000; background: #f4f4f4; }
.l3 { padding-left: 48px; letter-spacing: .2px; }

.main { flex: 1; padding: 15px 20px 0 20px; }
.crumbrow { display: flex; justify-content: space-between; height: 19px; }
.crumbs { font-size: 11px; line-height: 18px; letter-spacing: .04px; }
a { color: #2f6498; }
.help { font-size: 14px; line-height: 18px; color: #386797; display: flex; gap: 4px; letter-spacing: .3px; }
.help .ic { margin-top: 2px; }
h2 { margin: 0; height: 28px; border-bottom: 1px solid #91a4cb; font-weight: 400; font-size: 18px; line-height: 29px; color: #0d4d81; letter-spacing: .36px; }
.intro { margin: 18px 0 12px 10px; line-height: 20px; white-space: nowrap; letter-spacing: .225px; }
.tbl { margin-left: 12px; width: 1035px; border: 1px solid #cacaca; }
.th { height: 22px; padding-left: 8px; line-height: 16px; background: linear-gradient(#fff 10%, #d7d8d9); border-top: 2px solid #efebf5; letter-spacing: .22px; }
.tr { display: flex; height: 35px; border-top: 1px solid #cacaca; }
.tr.alt { background: #efebf5; }
.tn { width: 207px; flex: none; padding-left: 8px; border-right: 1px solid #cacaca; line-height: 33px; color: #386797; letter-spacing: .23px; }
.td { padding: 2px 0 0 8px; line-height: 15px; white-space: nowrap; letter-spacing: .235px; }
.scroll { width: 17px; height: 664px; background: #f0f0f0; display: flex; flex-direction: column; }
.scroll svg { width: 17px; height: 17px; flex: none; }
.thumb { height: 396px; background: #cdcdcd; }
.scroll svg:last-child { margin-top: auto; }

.taskbar { height: 30px; flex: none; background: #212225; display: flex; }
.task { width: 37px; flex: none; display: flex; justify-content: center; padding: 7px 1px 0 0; border-bottom: 2px solid transparent; }
.task:first-child { margin-left: -2px; }
.running { background: linear-gradient(#b7b1ab, #b7b1ab) center bottom / 28px 2px no-repeat border-box; }
.current { background: linear-gradient(#b7b1ab, #b7b1ab) center bottom / 36px 2px no-repeat border-box, #505153; }
.tray { margin-left: auto; display: flex; align-items: center; color: #fff; font-family: "Open Sans", sans-serif; }
.up { width: 12px; height: 8px; margin-right: 15px; }
.clock { letter-spacing: -.35px; width: 42px; white-space: nowrap; }
.note { width: 16px; height: 16px; margin: 0 20px 0 22px; }
.desk { width: 5px; height: 30px; border-left: 1px solid #777; }
</style>
